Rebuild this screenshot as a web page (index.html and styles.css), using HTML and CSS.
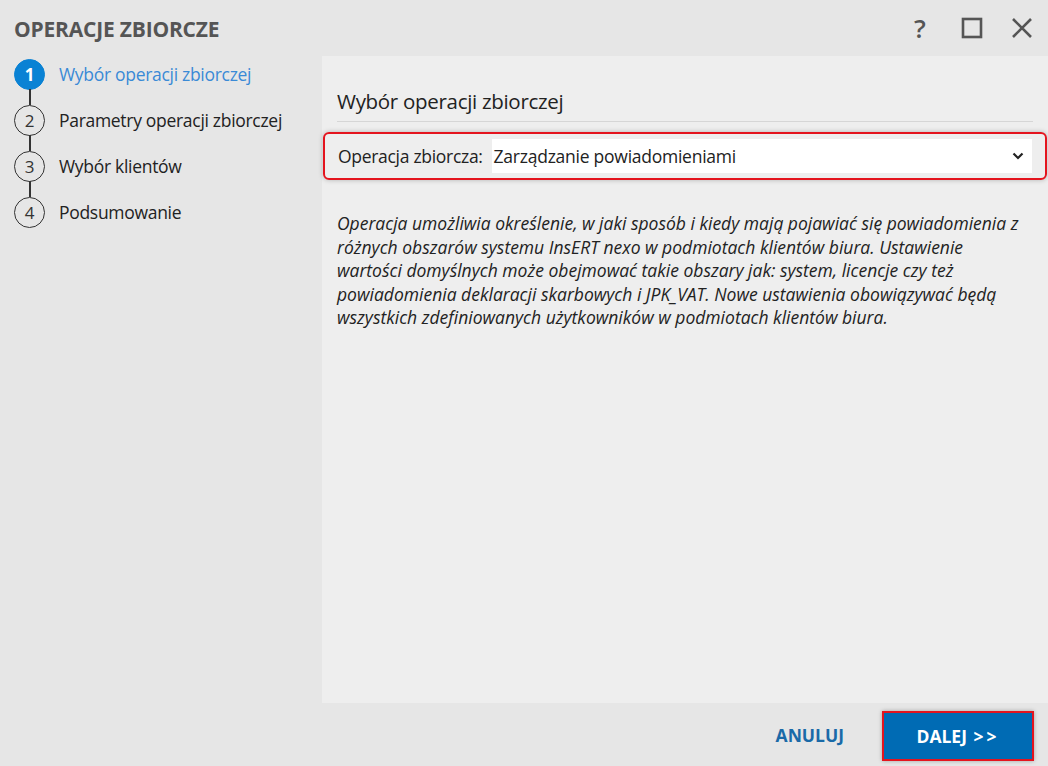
FILE: index.html
```html
<!DOCTYPE html>
<html lang="pl">
<head>
    <meta charset="UTF-8">
    <title>Operacje zbiorcze</title>
    <link rel="stylesheet" href="styles.css">
</head>
<body>
    <div class="dialog">
        <div class="header">
            <h1>OPERACJE ZBIORCZE</h1>
            <div class="win-buttons">
                <span class="win-btn help">?</span>
                <span class="win-btn">
                    <svg width="22" height="22" viewBox="0 0 22 22"><rect x="2" y="2" width="18" height="18" fill="none" stroke="#555" stroke-width="2.6"/></svg>
                </span>
                <span class="win-btn">
                    <svg width="22" height="22" viewBox="0 0 22 22"><path d="M2 2 L20 20 M20 2 L2 20" stroke="#555" stroke-width="2.6"/></svg>
                </span>
            </div>
        </div>

        <div class="main">
            <ul class="steps">
                <li class="step active"><span class="num">1</span><span class="label">Wybór operacji zbiorczej</span></li>
                <li class="step"><span class="num">2</span><span class="label">Parametry operacji zbiorczej</span></li>
                <li class="step"><span class="num">3</span><span class="label">Wybór klientów</span></li>
                <li class="step last"><span class="num">4</span><span class="label">Podsumowanie</span></li>
            </ul>

            <div class="panel">
                <h2>Wybór operacji zbiorczej</h2>
                <div class="field-box">
                    <span class="field-label">Operacja zbiorcza:</span>
                    <div class="select">
                        <span>Zarządzanie powiadomieniami</span>
                        <svg width="12" height="8" viewBox="0 0 12 8"><path d="M1.5 1.5 L6 6 L10.5 1.5" fill="none" stroke="#222" stroke-width="2.2"/></svg>
                    </div>
                </div>
                <p class="desc">Operacja umożliwia określenie, w jaki sposób i kiedy mają pojawiać się powiadomienia z różnych obszarów systemu InsERT nexo w podmiotach klientów biura. Ustawienie wartości domyślnych może obejmować takie obszary jak: system, licencje czy też powiadomienia deklaracji skarbowych i JPK_VAT. Nowe ustawienia obowiązywać będą wszystkich zdefiniowanych użytkowników w podmiotach klientów biura.</p>
            </div>
        </div>

        <div class="footer">
            <button class="btn-cancel">ANULUJ</button>
            <button class="btn-next">DALEJ <span class="arrows">&gt;&gt;</span></button>
        </div>
    </div>
</body>
</html>
```

FILE: styles.css
```css
* {
    margin: 0;
    padding: 0;
    box-sizing: border-box;
    font-family: 'Open Sans', 'Noto Sans', sans-serif;
}
body {
    background-color: #e6e6e6;
    color: #222;
    width: 1048px;
    height: 766px;
    overflow: hidden;
}
.dialog {
    display: flex;
    flex-direction: column;
    height: 766px;
}
.header {
    height: 56px;
    display: flex;
    align-items: center;
    justify-content: space-between;
    padding: 0 15px 0 14px;
}
.header h1 {
    font-size: 21px;
    font-weight: 700;
    color: #555;
    letter-spacing: -0.2px;
    margin-top: 2px;
}
.win-buttons {
    display: flex;
    align-items: center;
    gap: 28px;
}
.win-btn {
    display: flex;
    align-items: center;
    justify-content: center;
    width: 22px;
    height: 22px;
}
.help {
    font-size: 26px;
    font-weight: 600;
    color: #555;
    margin-right: 2px;
}
.main {
    flex: 1;
    display: flex;
}
.steps {
    list-style: none;
    width: 322px;
    padding: 0 0 0 14px;
    margin-top: -5px;
}
.step {
    display: flex;
    align-items: center;
    height: 46px;
    position: relative;
}
.step::after {
    content: '';
    position: absolute;
    left: 15px;
    top: 38px;
    width: 2px;
    height: 16px;
    background-color: #333;
}
.step.last::after {
    display: none;
}
.num {
    width: 31px;
    height: 31px;
    border: 1.5px solid #333;
    border-radius: 50%;
    display: flex;
    align-items: center;
    justify-content: center;
    font-size: 17px;
    color: #333;
    margin-right: 14px;
    margin-top: 1px;
}
.label {
    font-size: 17.5px;
    color: #222;
    letter-spacing: -0.3px;
}
.step.active .num {
    background-color: #0a82d4;
    border-color: #0a82d4;
    color: white;
    font-weight: 700;
}
.step.active .label {
    color: #3a8ad6;
}
.panel {
    flex: 1;
    background-color: #eeeeee;
    padding: 31px 1px 0 1px;
}
.panel h2 {
    font-size: 20.5px;
    font-weight: 400;
    color: #222;
    margin: 0 14px 0 14px;
    padding-bottom: 6px;
    border-bottom: 1px solid #d6d6d6;
    letter-spacing: -0.3px;
}
.field-box {
    margin-top: 10px;
    height: 48px;
    border: 2px solid #e4141e;
    border-radius: 6px;
    box-shadow: 0 0 5px rgba(0, 0, 0, 0.25);
    display: flex;
    align-items: center;
    padding: 0 13px 0 13px;
}
.field-label {
    font-size: 17.5px;
    color: #222;
    margin-right: 9px;
    letter-spacing: -0.3px;
}
.select {
    flex: 1;
    height: 34px;
    background-color: white;
    display: flex;
    align-items: center;
    justify-content: space-between;
    padding: 0 8px 0 2px;
    font-size: 17.5px;
    letter-spacing: -0.25px;
}
.desc {
    margin: 32px 18px 0 14px;
    font-size: 17.5px;
    font-style: italic;
    line-height: 23.5px;
    color: #222;
    letter-spacing: 0;
}
.footer {
    height: 63px;
    display: flex;
    align-items: center;
    justify-content: flex-end;
    padding-right: 14px;
}
.btn-cancel {
    background: none;
    border: none;
    font-size: 17.5px;
    font-weight: 700;
    color: #1a6aa8;
    margin-right: 38px;
}
.btn-next {
    width: 152px;
    height: 50px;
    background-color: #006bb4;
    border: 2px solid #e4141e;
    color: white;
    font-size: 17.5px;
    font-weight: 700;
    box-shadow: 0 0 4px rgba(0, 0, 0, 0.3);
    margin-top: 2px;
}
.arrows {
    letter-spacing: 3px;
    margin-left: 2px;
}
```
